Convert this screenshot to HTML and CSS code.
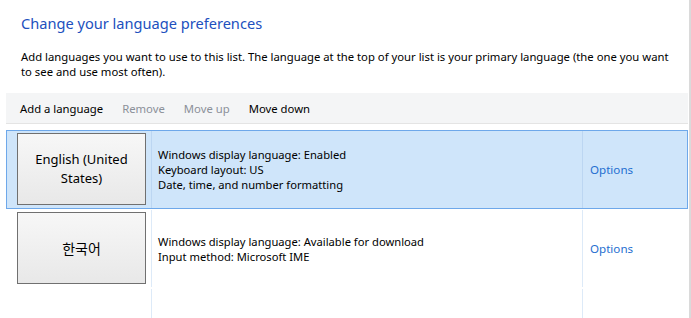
FILE: index.html
```html
<!DOCTYPE html>
<html lang="en">
<head>
    <meta charset="UTF-8">
    <title>Language</title>
    <link rel="stylesheet" href="styles.css">
</head>
<body>
    <div class="page">
        <h1>Change your language preferences</h1>
        <p class="intro">Add languages you want to use to this list. The language at the top of your list is your primary language (the one you want to see and use most often).</p>

        <div class="toolbar">
            <span class="tool">Add a language</span>
            <span class="tool disabled">Remove</span>
            <span class="tool disabled">Move up</span>
            <span class="tool">Move down</span>
        </div>

        <div class="lang-list">
            <div class="lang-row selected">
                <div class="cell name-cell">
                    <div class="lang-button">English (United States)</div>
                </div>
                <div class="cell details">
                    <div>Windows display language: Enabled</div>
                    <div>Keyboard layout: US</div>
                    <div>Date, time, and number formatting</div>
                </div>
                <div class="cell options"><span class="link">Options</span></div>
            </div>

            <div class="lang-row">
                <div class="cell name-cell">
                    <div class="lang-button korean">한국어</div>
                </div>
                <div class="cell details">
                    <div>Windows display language: Available for download</div>
                    <div>Input method: Microsoft IME</div>
                </div>
                <div class="cell options"><span class="link">Options</span></div>
            </div>

            <div class="lang-row filler">
                <div class="cell name-cell"></div>
                <div class="cell details"></div>
                <div class="cell options"></div>
            </div>
        </div>
    </div>
</body>
</html>
```

FILE: styles.css
```css
body, html {
    margin: 0;
    padding: 0;
    background-color: white;
    font-family: 'Noto Sans', 'Noto Sans CJK KR', sans-serif;
    color: #000;
    overflow: hidden;
}

.page {
    width: 689px;
    height: 318px;
    border-right: 2px solid #dadada;
    box-sizing: content-box;
}

h1 {
    margin: 0;
    padding: 11px 0 0 21px;
    height: 25px;
    font-size: 14.6px;
    font-weight: normal;
    color: #2150be;
    line-height: 24px;
}

.intro {
    margin: 13px 0 0 21px;
    width: 652px;
    font-size: 11.3px;
    line-height: 15px;
}

.toolbar {
    margin: 14px 0 0 6px;
    width: 682px;
    height: 31px;
    display: flex;
    align-items: center;
    gap: 19px;
    padding-left: 14px;
    box-sizing: border-box;
    background-color: #f4f5f6;
    border-bottom: 1px solid #e4e4e4;
    font-size: 11.3px;
}

    .tool.disabled {
        color: #8b9099;
    }

.lang-list {
    margin: 6px 0 0 6px;
    width: 682px;
}

.lang-row {
    display: flex;
    height: 79px;
    border: 1px solid transparent;
    box-sizing: border-box;
}

    .lang-row.selected {
        background-color: #cfe5fa;
        border-color: #6ea8ea;
    }

    .lang-row.filler {
        height: 40px;
        border-bottom: none;
    }

.cell {
    display: flex;
    flex-direction: column;
    justify-content: center;
    font-size: 11.2px;
    line-height: 15px;
}

.name-cell {
    width: 145px;
    border-right: 1px solid #ddeaf8;
    padding: 2px 0 3px 10px;
    box-sizing: border-box;
}

.selected .name-cell,
.selected .details {
    border-right-color: #bcd6f2;
}

.details {
    width: 431px;
    padding-left: 6px;
    border-right: 1px solid #ddeaf8;
    box-sizing: border-box;
}

.options {
    flex: 1;
    padding-left: 7px;
}

    .options .link {
        color: #1f6fd0;
        font-size: 11.6px;
    }

.lang-button {
    width: 129px;
    height: 72px;
    box-sizing: border-box;
    border: 1px solid #707070;
    background: linear-gradient(#f7f7f7, #e8e8e8);
    display: flex;
    align-items: center;
    justify-content: center;
    text-align: center;
    font-size: 13px;
    line-height: 19px;
    padding: 0 12px;
}

    .lang-button.korean {
        font-family: 'Noto Sans CJK KR', sans-serif;
        font-size: 14px;
    }
```
